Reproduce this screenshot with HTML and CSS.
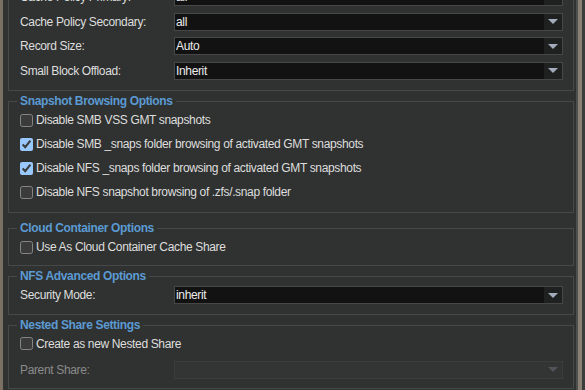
FILE: index.html
```html
<!DOCTYPE html>
<html lang="en">
<head>
  <meta charset="UTF-8">
  <meta name="viewport" content="width=device-width, initial-scale=1.0">
  <title>Share Options</title>
  <link rel="stylesheet" href="styles.css">
</head>
<body>
  <div class="page">
    <div class="edge"></div>

    <main class="panel">
      <fieldset class="group group-top">
        <div class="field">
          <label>Cache Policy Primary:</label>
          <div class="select">
            <select><option>all</option></select>
            <span class="arrow"><svg width="10" height="5" viewBox="0 0 10 5"><path d="M0 0h10L5 5z"/></svg></span>
          </div>
        </div>
        <div class="field">
          <label>Cache Policy Secondary:</label>
          <div class="select">
            <select><option>all</option></select>
            <span class="arrow"><svg width="10" height="5" viewBox="0 0 10 5"><path d="M0 0h10L5 5z"/></svg></span>
          </div>
        </div>
        <div class="field">
          <label>Record Size:</label>
          <div class="select">
            <select><option>Auto</option></select>
            <span class="arrow"><svg width="10" height="5" viewBox="0 0 10 5"><path d="M0 0h10L5 5z"/></svg></span>
          </div>
        </div>
        <div class="field">
          <label>Small Block Offload:</label>
          <div class="select">
            <select><option>Inherit</option></select>
            <span class="arrow"><svg width="10" height="5" viewBox="0 0 10 5"><path d="M0 0h10L5 5z"/></svg></span>
          </div>
        </div>
      </fieldset>

      <fieldset class="group group-snapshots">
        <legend>Snapshot Browsing Options</legend>
        <label class="check"><input type="checkbox"> Disable SMB VSS GMT snapshots</label>
        <label class="check"><input type="checkbox" checked> Disable SMB _snaps folder browsing of activated GMT snapshots</label>
        <label class="check"><input type="checkbox" checked> Disable NFS _snaps folder browsing of activated GMT snapshots</label>
        <label class="check"><input type="checkbox"> Disable NFS snapshot browsing of .zfs/.snap folder</label>
      </fieldset>

      <fieldset class="group">
        <legend>Cloud Container Options</legend>
        <label class="check"><input type="checkbox"> Use As Cloud Container Cache Share</label>
      </fieldset>

      <fieldset class="group">
        <legend>NFS Advanced Options</legend>
        <div class="field">
          <label>Security Mode:</label>
          <div class="select">
            <select><option>inherit</option></select>
            <span class="arrow"><svg width="10" height="5" viewBox="0 0 10 5"><path d="M0 0h10L5 5z"/></svg></span>
          </div>
        </div>
      </fieldset>

      <fieldset class="group">
        <legend>Nested Share Settings</legend>
        <label class="check"><input type="checkbox"> Create as new Nested Share</label>
        <div class="field field-spaced is-disabled">
          <label>Parent Share:</label>
          <div class="select">
            <select disabled></select>
            <span class="arrow"><svg width="10" height="5" viewBox="0 0 10 5"><path d="M0 0h10L5 5z"/></svg></span>
          </div>
        </div>
      </fieldset>
    </main>

    <div class="scrollbar">
      <div class="scroll-track"></div>
      <div class="scroll-thumb"></div>
      <div class="scroll-edge"></div>
    </div>
  </div>
</body>
</html>
```

FILE: styles.css
```css
html, body {
  margin: 0;
  height: 100%;
  overflow: hidden;
}

body {
  font-family: 'Liberation Sans', Arial, sans-serif;
  font-size: 12px;
  letter-spacing: -0.35px;
  background-color: #303231;
  color: #dedede;
}

.page {
  display: flex;
  height: 100%;
}

.edge {
  width: 3px;
  flex-shrink: 0;
  background-color: #7b7064;
}

.panel {
  flex: 1;
  min-width: 0;
  padding: 0 2px 0 5px;
}

.scrollbar {
  display: flex;
  flex-shrink: 0;
}

.scroll-track {
  width: 2px;
  background-color: #4d4e4e;
}

.scroll-thumb {
  width: 4px;
  background-color: #8b8074;
}

.scroll-edge {
  width: 3px;
  background-color: #3b3c3c;
}

/* fieldsets */
.group {
  margin: 0 0 4px;
  padding: 0 10px 6px 11px;
  border: 1px solid #474948;
  min-width: 0;
}

.group-top {
  margin-top: -16px;
  padding-bottom: 7px;
}

.group-snapshots {
  padding-bottom: 8px;
  margin-bottom: 9px;
}

.group legend {
  margin-left: -3px;
  padding: 0 3px;
  line-height: 13px;
  font-weight: bold;
  color: #5b9ad3;
}

/* label + select rows */
.field {
  display: flex;
  align-items: center;
  height: 24.5px;
}

.field-spaced {
  margin-top: 2px;
}

.field > label {
  width: 154px;
  flex-shrink: 0;
}

.select {
  flex: 1;
  display: flex;
  height: 18px;
  box-sizing: border-box;
  border: 1px solid #474747;
  background-color: #121212;
}

.select select {
  flex: 1;
  min-width: 0;
  appearance: none;
  -webkit-appearance: none;
  border: 0;
  outline: none;
  padding: 0 1px;
  background: transparent;
  color: #ececec;
  font: inherit;
  letter-spacing: inherit;
}

.arrow {
  width: 18px;
  display: flex;
  align-items: center;
  justify-content: center;
  background-color: #1f2020;
}

.arrow svg {
  fill: #a3acbb;
}

.is-disabled > label {
  color: #8a8a8a;
}

.is-disabled .select {
  background-color: #333534;
  border-color: #3b3d3c;
}

.is-disabled .arrow {
  background-color: transparent;
}

.is-disabled .arrow svg {
  fill: #50545a;
}

/* checkbox rows */
.check {
  display: flex;
  align-items: center;
  gap: 3px;
  height: 24px;
}

.check input {
  margin: 0;
  width: 13px;
  height: 13px;
  color-scheme: dark;
}
```
